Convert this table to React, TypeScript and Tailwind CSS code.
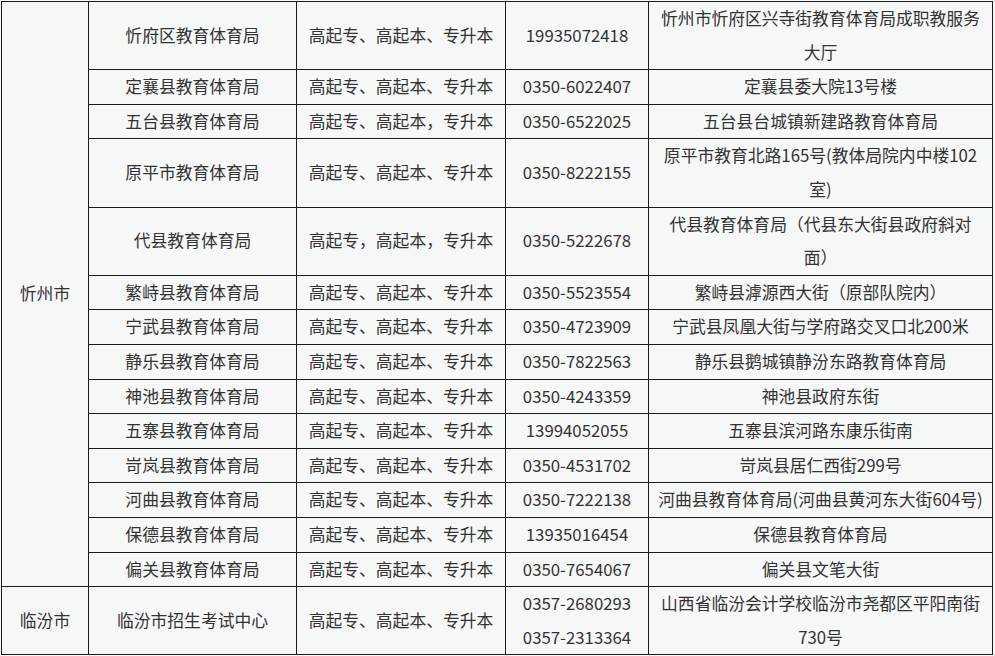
import React from "react"

type Row = {
  office: string
  levels: string
  phone: string[]
  address: string[]
}

const xinzhou: Row[] = [
  { office: "忻府区教育体育局", levels: "高起专、高起本、专升本", phone: ["19935072418"], address: ["忻州市忻府区兴寺街教育体育局成职教服务", "大厅"] },
  { office: "定襄县教育体育局", levels: "高起专、高起本、专升本", phone: ["0350-6022407"], address: ["定襄县委大院13号楼"] },
  { office: "五台县教育体育局", levels: "高起专、高起本，专升本", phone: ["0350-6522025"], address: ["五台县台城镇新建路教育体育局"] },
  { office: "原平市教育体育局", levels: "高起专、高起本、专升本", phone: ["0350-8222155"], address: ["原平市教育北路165号(教体局院内中楼102", "室)"] },
  { office: "代县教育体育局", levels: "高起专，高起本，专升本", phone: ["0350-5222678"], address: ["代县教育体育局（代县东大街县政府斜对", "面）"] },
  { office: "繁峙县教育体育局", levels: "高起专、高起本、专升本", phone: ["0350-5523554"], address: ["繁峙县滹源西大街（原部队院内）"] },
  { office: "宁武县教育体育局", levels: "高起专、高起本、专升本", phone: ["0350-4723909"], address: ["宁武县凤凰大街与学府路交叉口北200米"] },
  { office: "静乐县教育体育局", levels: "高起专、高起本、专升本", phone: ["0350-7822563"], address: ["静乐县鹅城镇静汾东路教育体育局"] },
  { office: "神池县教育体育局", levels: "高起专、高起本、专升本", phone: ["0350-4243359"], address: ["神池县政府东街"] },
  { office: "五寨县教育体育局", levels: "高起专、高起本、专升本", phone: ["13994052055"], address: ["五寨县滨河路东康乐街南"] },
  { office: "岢岚县教育体育局", levels: "高起专、高起本、专升本", phone: ["0350-4531702"], address: ["岢岚县居仁西街299号"] },
  { office: "河曲县教育体育局", levels: "高起专、高起本、专升本", phone: ["0350-7222138"], address: ["河曲县教育体育局(河曲县黄河东大街604号)"] },
  { office: "保德县教育体育局", levels: "高起专、高起本、专升本", phone: ["13935016454"], address: ["保德县教育体育局"] },
  { office: "偏关县教育体育局", levels: "高起专、高起本、专升本", phone: ["0350-7654067"], address: ["偏关县文笔大街"] },
]

const linfen: Row = {
  office: "临汾市招生考试中心",
  levels: "高起专、高起本、专升本",
  phone: ["0357-2680293", "0357-2313364"],
  address: ["山西省临汾会计学校临汾市尧都区平阳南街", "730号"],
}

const cell = "border border-[#1a1a1a] p-0 text-center align-middle whitespace-nowrap"

function Lines({ items }: { items: string[] }) {
  return (
    <>
      {items.map((t, i) => (
        <div key={i}>{t}</div>
      ))}
    </>
  )
}

function Cells({ row }: { row: Row }) {
  return (
    <>
      <td className={cell}>{row.office}</td>
      <td className={cell}>{row.levels}</td>
      <td className={cell}><Lines items={row.phone} /></td>
      <td className={cell}><Lines items={row.address} /></td>
    </>
  )
}

export default function App() {
  return (
    <div className="min-h-screen bg-[#f6f7f7] pt-px pl-px" style={{ fontFamily: '"Noto Sans CJK SC", "Noto Sans", sans-serif' }}>
      <table className="table-fixed border-collapse text-[16.8px] leading-[33.6px] text-[#333]">
        <colgroup>
          <col className="w-[87px]" />
          <col className="w-[208px]" />
          <col className="w-[209px]" />
          <col className="w-[143px]" />
          <col className="w-[344px]" />
        </colgroup>
        <tbody>
          {xinzhou.map((row, i) => (
            <tr key={row.office}>
              {i === 0 && (
                <td className={cell} rowSpan={xinzhou.length}>忻州市</td>
              )}
              <Cells row={row} />
            </tr>
          ))}
          <tr>
            <td className={cell}>临汾市</td>
            <Cells row={linfen} />
          </tr>
        </tbody>
      </table>
    </div>
  )
}
